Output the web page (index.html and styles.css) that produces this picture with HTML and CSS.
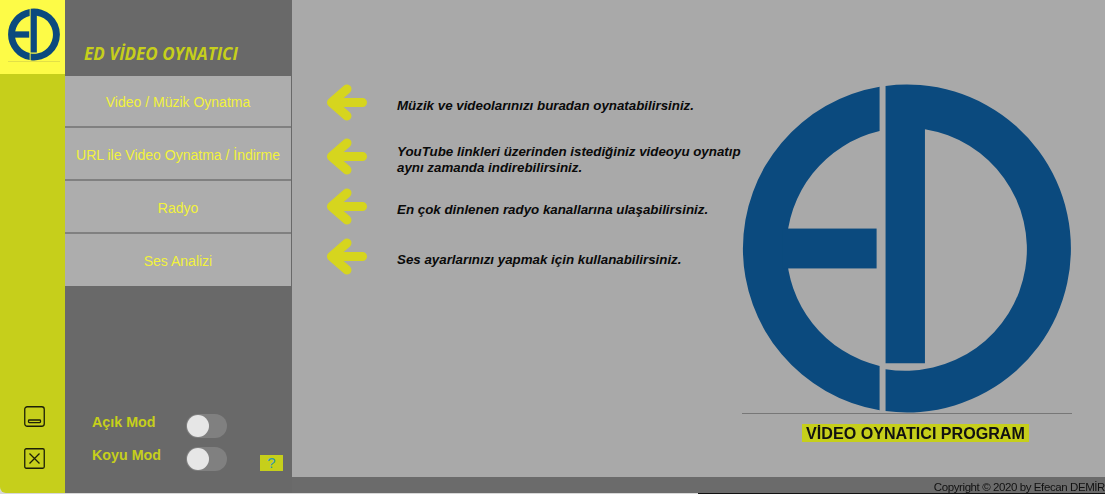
FILE: index.html
```html
<!DOCTYPE html>
<html lang="tr">
<head>
<meta charset="utf-8">
<title>ED Video Oynatıcı</title>
<link rel="stylesheet" href="styles.css">
</head>
<body>
<svg class="defs" width="0" height="0" aria-hidden="true">
  <symbol id="ed-logo" viewBox="0 0 330 330">
    <path d="M137.5 2.8A164.5 164.5 0 0 0 137.5 327.2V282.8A121 121 0 0 1 137.5 47.2Z"/>
    <rect x="40" y="145" width="94.5" height="40"/>
    <path d="M143.5 1.9A164.5 164.5 0 1 1 143.5 328.1V286A121 121 0 1 0 183 45.3V280H143.5Z"/>
  </symbol>
  <symbol id="arrow" viewBox="0 0 40 37">
    <path d="M20 5 4.5 18.5 20 32M5 18.5H35.5" fill="none" stroke-width="9" stroke-linecap="round" stroke-linejoin="round"/>
  </symbol>
</svg>
<div class="app">
  <aside class="rail">
    <div class="rail-logo"><svg class="logo-small"><use href="#ed-logo"/></svg></div>
    <div class="rail-actions">
      <svg class="win-icon" viewBox="0 0 21 21"><rect x=".75" y=".75" width="19.5" height="19.5" rx="2.5"/><rect x="4.5" y="14" width="12" height="2.6" rx=".8"/></svg>
      <svg class="win-icon" viewBox="0 0 21 21"><rect x=".75" y=".75" width="19.5" height="19.5" rx="1.5"/><path d="M5.5 5.5 15.5 15.5M15.5 5.5 5.5 15.5"/></svg>
    </div>
  </aside>
  <nav class="sidebar">
    <h1 class="brand">ED VİDEO OYNATICI</h1>
    <ul class="menu">
      <li class="menu-item">Video / Müzik Oynatma</li>
      <li class="menu-item">URL ile Video Oynatma / İndirme</li>
      <li class="menu-item">Radyo</li>
      <li class="menu-item">Ses Analizi</li>
    </ul>
    <div class="modes">
      <div class="mode-list">
        <div class="mode"><span class="mode-label">Açık Mod</span><span class="toggle"></span></div>
        <div class="mode"><span class="mode-label">Koyu Mod</span><span class="toggle"></span></div>
      </div>
      <span class="help">?</span>
    </div>
  </nav>
  <div class="content">
    <main class="main">
      <div class="hints">
        <div class="hint"><svg class="arrow"><use href="#arrow"/></svg><p class="hint-text">Müzik ve videolarınızı buradan oynatabilirsiniz.</p></div>
        <div class="hint"><svg class="arrow"><use href="#arrow"/></svg><p class="hint-text">YouTube linkleri üzerinden istediğiniz videoyu oynatıp<br>aynı zamanda indirebilirsiniz.</p></div>
        <div class="hint"><svg class="arrow"><use href="#arrow"/></svg><p class="hint-text">En çok dinlenen radyo kanallarına ulaşabilirsiniz.</p></div>
        <div class="hint"><svg class="arrow"><use href="#arrow"/></svg><p class="hint-text">Ses ayarlarınızı yapmak için kullanabilirsiniz.</p></div>
      </div>
      <figure class="hero">
        <svg class="logo-large"><use href="#ed-logo"/></svg>
        <figcaption class="caption"><span class="caption-text">VİDEO OYNATICI PROGRAM</span></figcaption>
      </figure>
    </main>
    <footer class="copyright">Copyright © 2020 by Efecan DEMİR</footer>
  </div>
</div>
<div class="edge"></div>
</body>
</html>
```
FILE: styles.css
```css
* { box-sizing: border-box; }
html, body { margin: 0; height: 100%; overflow: hidden; }
body { background: #d8d8d8; font-family: "Liberation Sans", Arial, sans-serif; }
.defs { position: absolute; }
.app { display: grid; grid-template-columns: 65px 227px 1fr; height: 493px; filter: blur(.4px); }
.edge { height: 1px; background: linear-gradient(to right, #d8d8d8 698px, #111 698px); }

.rail { background: #c6cf1b; display: flex; flex-direction: column; border-bottom-left-radius: 6px; }
.rail-logo { height: 74px; background: #fdfb47; padding: 8px 0 0 8px; }
.logo-small { display: block; width: 52px; height: 54px; fill: #0b4a7e; border-bottom: 1px solid #e2e048; }
.rail-actions { margin-top: auto; padding: 0 0 24px 24px; display: flex; flex-direction: column; gap: 21px; }
.win-icon { display: block; width: 21px; height: 21px; fill: none; stroke: #1c1f08; stroke-width: 1.3; }

.sidebar { background: #696969; display: flex; flex-direction: column; padding-right: 1px; }
.brand { margin: 0; height: 76px; padding: 43px 0 0 19px; font: italic 700 17px/22px "Open Sans", sans-serif; color: #c6cf1b; white-space: nowrap; }
.menu { list-style: none; margin: 0; padding: 0; }
.menu-item { height: 53px; display: flex; align-items: center; justify-content: center; background: #adadad; border-bottom: 2px solid #808080; color: #f2f23c; font-size: 14px; padding-top: 2px; }
.menu-item:first-child { height: 52px; }
.menu-item:last-child { height: 52px; border-bottom: 0; }
.modes { margin-top: auto; padding: 0 0 22px 27px; display: flex; align-items: flex-end; }
.mode-list { display: flex; flex-direction: column; gap: 9px; }
.mode { display: flex; align-items: center; height: 24px; }
.mode-label { width: 94px; padding-bottom: 9px; font-size: 14.3px; font-weight: 700; color: #c6cf1b; white-space: nowrap; }
.toggle { width: 41px; height: 24px; border-radius: 12px; background: #808080; padding: 1px; display: block; }
.toggle::before { content: ""; display: block; width: 22px; height: 22px; border-radius: 50%; background: #e6e6e6; }
.help { width: 23px; height: 16px; margin-left: 33px; background: #c6cf1b; color: #2f96b4; font-size: 15px; line-height: 16px; text-align: center; }

.content { display: flex; flex-direction: column; min-width: 0; }
.main { flex: 1; background: #a9a9a9; display: flex; padding: 84px 33px 0 35px; }
.hints { width: 415px; }
.hint { display: flex; align-items: center; gap: 30px; height: 37px; margin-bottom: 13px; }
.hint:first-child { margin-bottom: 17px; }
.hint:last-child { margin-bottom: 0; }
.arrow { width: 40px; height: 37px; flex: none; fill: none; stroke: #d6d51e; }
.hint-text { margin: 0; padding-top: 6px; font-size: 13.33px; line-height: 16px; font-style: italic; font-weight: 700; color: #0a0a0a; white-space: nowrap; }
.hero { margin: 0; width: 330px; display: flex; flex-direction: column; align-items: stretch; }
.logo-large { display: block; width: 330px; height: 329px; fill: #0b4a7e; flex: none; }
.caption { border-top: 1px solid #777; padding: 10px 0 0 17px; text-align: center; }
.caption-text { display: inline-block; background: #c6cf1b; padding: 0 4px; font-size: 16.1px; line-height: 18px; font-weight: 700; color: #111; white-space: nowrap; }
.copyright { height: 16px; background: #6b6b6b; color: #111; font-size: 11.5px; letter-spacing: -.41px; line-height: 20px; text-align: right; white-space: nowrap; }
```
